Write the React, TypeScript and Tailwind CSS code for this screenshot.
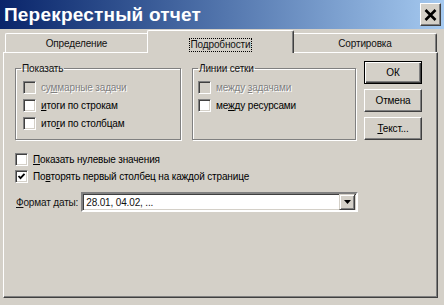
import React from 'react'

type CheckProps = { label: React.ReactNode; checked?: boolean; disabled?: boolean }

function Check({ label, checked, disabled }: CheckProps) {
  return (
    <div className="flex items-center h-[13px]">
      <span
        className={`w-[13px] h-[13px] shrink-0 flex items-center justify-center border border-t-[#808080] border-l-[#808080] border-r-white border-b-white shadow-[inset_1px_1px_0_#404040,inset_-1px_-1px_0_#d4d0c8] ${
          disabled ? 'bg-[#d4d0c8]' : 'bg-white'
        }`}
      >
        {checked && (
          <svg width="9" height="9" viewBox="0 0 9 9">
            <polyline points="1.5,4 3.5,6.2 7.5,1.8" fill="none" stroke="#000" strokeWidth="1.8" />
          </svg>
        )}
      </span>
      <span
        className={`ml-[5px] leading-[13px] whitespace-nowrap ${
          disabled ? 'text-[#808080] [text-shadow:1px_1px_0_#fff]' : 'text-black'
        }`}
      >
        {label}
      </span>
    </div>
  )
}

function Btn({ children, isDefault }: { children: React.ReactNode; isDefault?: boolean }) {
  return (
    <button
      className={`w-[58px] h-[23px] bg-[#d4d0c8] text-black flex items-center justify-center ${
        isDefault
          ? 'border border-black shadow-[inset_1px_1px_0_#fff,inset_-1px_-1px_0_#404040,inset_-2px_-2px_0_#808080]'
          : 'border border-t-white border-l-white border-r-[#404040] border-b-[#404040] shadow-[inset_-1px_-1px_0_#808080]'
      }`}
    >
      {children}
    </button>
  )
}

export default function App() {
  return (
    <div className="w-[444px] h-[305px] bg-[#d4d0c8] flex flex-col overflow-hidden font-['Liberation_Sans',Arial,sans-serif] text-[10px] tracking-[-0.15px] text-[#111]">
      {/* Title bar */}
      <div className="h-[29px] shrink-0 flex items-center pl-[4px] pr-[3px] bg-gradient-to-r from-[#0a246a] to-[#a6caf0]">
        <span className="text-[19px] font-bold text-white leading-none tracking-[0.2px]">Перекрестный отчет</span>
        <button className="ml-auto w-[21px] h-[23px] bg-[#d4d0c8] flex items-center justify-center border border-t-white border-l-white border-r-[#404040] border-b-[#404040] shadow-[inset_-1px_-1px_0_#808080]">
          <svg width="13" height="12" viewBox="0 0 13 12">
            <path d="M1.5 1 L11.5 11 M11.5 1 L1.5 11" stroke="#000" strokeWidth="2.6" />
          </svg>
        </button>
      </div>

      <div className="flex flex-col pl-[3px] pt-[1px]">
        {/* Tabs */}
        <div className="flex items-end h-[22px] pl-[2px]">
          <div className="w-[142px] h-[19px] flex items-center justify-center border-t border-l border-white rounded-tl-[2px]">
            Определение
          </div>
          <div className="relative z-10 -mb-px w-[147px] h-[23px] bg-[#d4d0c8] flex justify-center pt-[7px] border-t border-l border-t-white border-l-white border-r border-r-[#404040] shadow-[inset_-1px_0_0_#808080] rounded-t-[2px]">
            <span className="h-[14px] leading-[12px] px-[1px] border border-dotted border-black">Подробности</span>
          </div>
          <div className="w-[143px] h-[19px] flex items-center justify-center border-t border-t-white border-r border-r-[#404040] shadow-[inset_-1px_0_0_#808080] rounded-tr-[2px]">
            Сортировка
          </div>
        </div>

        {/* Panel */}
        <div className="w-[435px] h-[246px] flex flex-col pt-[8px] pl-[11px] border border-t-white border-l-white border-r-[#404040] border-b-[#404040] shadow-[inset_-1px_-1px_0_#808080]">
          <div className="flex">
            <fieldset className="mt-[1px] w-[166px] h-[78px] border border-[#808080] shadow-[1px_1px_0_#fff,inset_1px_1px_0_#fff]">
              <legend className="ml-[5px] px-[1px] leading-[13px]">Показать</legend>
              <div className="flex flex-col gap-[5px] pl-[7px] pt-[6px]">
                <Check disabled label={<>су<span className="underline">м</span>марные задачи</>} />
                <Check label={<><span className="underline">и</span>тоги по строкам</>} />
                <Check label={<>ито<span className="underline">г</span>и по столбцам</>} />
              </div>
            </fieldset>
            <fieldset className="mt-[1px] ml-[11px] w-[164px] h-[78px] border border-[#808080] shadow-[1px_1px_0_#fff,inset_1px_1px_0_#fff]">
              <legend className="ml-[5px] px-[1px] leading-[13px]">Линии сетки</legend>
              <div className="flex flex-col gap-[5px] pl-[5px] pt-[6px]">
                <Check disabled label={<>между <span className="underline">з</span>адачами</>} />
                <Check label={<>ме<span className="underline">ж</span>ду ресурсами</>} />
              </div>
            </fieldset>
            <div className="ml-[8px] flex flex-col gap-[5px]">
              <Btn isDefault>ОК</Btn>
              <Btn>Отмена</Btn>
              <Btn>
                <span>
                  <span className="underline">Т</span>екст...
                </span>
              </Btn>
            </div>
          </div>

          <div className="mt-[13px] flex flex-col gap-[4px]">
            <Check label={<><span className="underline">П</span>оказать нулевые значения</>} />
            <Check checked label={<>По<span className="underline">в</span>торять первый столбец на каждой странице</>} />
          </div>

          <div className="mt-[9px] flex items-center">
            <span className="ml-[1px] whitespace-nowrap">
              <span className="underline">Ф</span>ормат даты:
            </span>
            <div className="ml-[3px] w-[277px] h-[20px] flex items-center bg-white border-2 border-t-[#808080] border-l-[#808080] border-r-white border-b-white shadow-[inset_1px_1px_0_#404040,inset_-1px_-1px_0_#d4d0c8]">
              <span className="pl-[3px] flex-1 whitespace-nowrap">28.01, 04.02, ...</span>
              <div className="w-[16px] h-[16px] mr-[1px] bg-[#d4d0c8] flex items-center justify-center border border-t-[#d4d0c8] border-l-[#d4d0c8] border-r-[#404040] border-b-[#404040] shadow-[inset_1px_1px_0_#fff,inset_-1px_-1px_0_#808080]">
                <svg width="7" height="4" viewBox="0 0 7 4">
                  <path d="M0 0 H7 L3.5 4 Z" fill="#000" />
                </svg>
              </div>
            </div>
          </div>
        </div>
      </div>
    </div>
  )
}
